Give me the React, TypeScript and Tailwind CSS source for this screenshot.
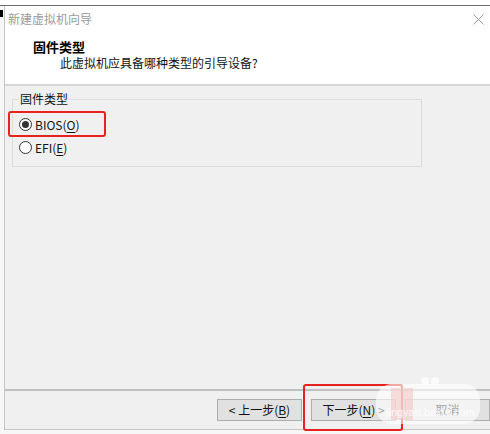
import React from 'react';

const Radio: React.FC<{ checked?: boolean; label: string; mnemonic: string }> = ({ checked, label, mnemonic }) => (
  <div className="flex items-center h-[23px]">
    <span className="w-[13px] h-[13px] rounded-full border border-[#333] bg-white flex items-center justify-center">
      {checked && <span className="w-[7px] h-[7px] rounded-full bg-[#333]" />}
    </span>
    <span className="ml-[3px] text-[12px] text-[#111] leading-none">
      {label}(<span className="underline underline-offset-2">{mnemonic}</span>)
    </span>
  </div>
);

const WizButton: React.FC<{ children: React.ReactNode }> = ({ children }) => (
  <button className="w-[85px] h-[22px] bg-[#e1e1e1] border border-[#adadad] text-[12px] text-[#111] leading-none flex items-center justify-center">
    {children}
  </button>
);

const App: React.FC = () => {
  return (
    <div className="relative w-[490px] h-[434px] bg-[#f7f7f7] overflow-hidden font-['Noto_Sans_CJK_SC',sans-serif]">
      <div className="h-[5px] bg-white" />
      <div className="h-px bg-[#6b6b6b]" />
      <div className="absolute left-0 top-[10px] w-[3px] h-[7px] bg-black" />

      {/* dialog window */}
      <div className="ml-[4px] w-[486px] h-[424px] border-l border-b border-[#c4c4c4] flex flex-col bg-[#f0f0f0]">
        {/* title bar */}
        <div className="h-[25px] bg-white flex items-center justify-between pl-[3px] pr-[6px]">
          <span className="text-[12px] text-[#9a9a9a]">新建虚拟机向导</span>
          <svg width="11" height="11" viewBox="0 0 11 11" className="mt-[1px]">
            <path d="M0.5 0.5 L10.5 10.5 M10.5 0.5 L0.5 10.5" stroke="#9a9a9a" strokeWidth="1" />
          </svg>
        </div>

        {/* header */}
        <div className="h-[55px] bg-white border-b-2 border-[#d6d6d6] pt-[7px] flex flex-col items-start">
          <div className="ml-[28px] text-[13px] font-bold text-black leading-[17px]">固件类型</div>
          <div className="ml-[55px] text-[12px] text-[#111] leading-[17px] -mt-px">此虚拟机应具备哪种类型的引导设备?</div>
        </div>

        {/* body */}
        <div className="flex-1 px-[7px] pt-[5px]">
          <fieldset className="w-[410px] h-[76px] border border-[#dcdcdc]">
            <legend className="ml-[6px] px-[1px] text-[12px] text-[#111] leading-[16px]">固件类型</legend>
            <div className="mt-[6px] pl-[6px]">
              <Radio checked label="BIOS" mnemonic="O" />
              <Radio label="EFI" mnemonic="E" />
            </div>
          </fieldset>
        </div>

        {/* footer */}
        <div className="h-[40px] border-t-2 border-[#c0c0c0] flex items-center gap-[9px] pl-[212px]">
          <WizButton>
            &lt; 上一步(<span className="underline underline-offset-2">B</span>)
          </WizButton>
          <WizButton>
            下一步(<span className="underline underline-offset-2">N</span>) &gt;
          </WizButton>
          <WizButton>取消</WizButton>
        </div>
      </div>

      {/* annotation boxes */}
      <div className="absolute left-[8px] top-[111px] w-[98px] h-[26px] border-2 border-[#e8231f] rounded-[3px]" />
      <div className="absolute left-[303px] top-[384px] w-[100px] h-[47px] border-2 border-[#e8231f] rounded-[3px]" />

      {/* watermark */}
      <div className="absolute left-[376px] top-[384px] w-[104px] h-[40px] rounded-[16px] bg-white/60" />
      <div className="absolute left-[421px] top-[377px] w-[8px] h-[8px] rounded-full bg-white/70" />
      <div className="absolute left-[431px] top-[377px] w-[8px] h-[8px] rounded-full bg-white/70" />
      <div className="absolute left-[391px] top-[388px] w-[22px] h-[32px] bg-[#f3c6c6]/60" />
      <div className="absolute left-[386px] top-[405px] text-[11px] leading-[14px] text-white/80 font-['Liberation_Sans',sans-serif]">
        jingyan.baidu.com
      </div>
    </div>
  );
};

export default App;
